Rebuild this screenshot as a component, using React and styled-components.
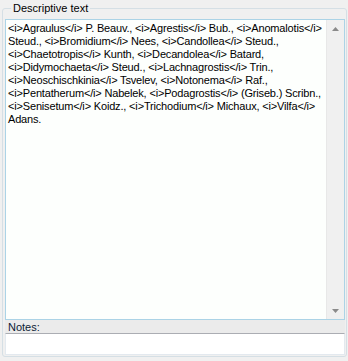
import React from "react";
import styled, { createGlobalStyle } from "styled-components";

const Global = createGlobalStyle`
  html, body { margin: 0; padding: 0; background: #f0f0f0; }
  body { width: 348px; height: 361px; overflow: hidden; }
`;

const Page = styled.div`
  width: 348px;
  height: 361px;
  box-sizing: border-box;
  padding: 2px 1px 4px 2px;
  font-family: "Liberation Sans", Arial, sans-serif;
  font-size: 11px;
  color: #000;
`;

const Group = styled.fieldset`
  margin: 0;
  height: 100%;
  box-sizing: border-box;
  border: 1px solid #d5dfe5;
  border-radius: 3px;
  padding: 4px 1px 1px 2px;
  display: flex;
  flex-direction: column;
  min-width: 0;
`;

const Legend = styled.legend`
  padding: 0 2px;
  margin-left: 6px;
  font-size: 11px;
  line-height: 13px;
  color: #000;
`;

const TextArea = styled.div`
  flex: 1;
  display: flex;
  border: 1px solid #abd3e6;
  background: #fdfffd;
  min-height: 0;
`;

const Content = styled.div`
  flex: 1;
  padding: 2px 2px 0 2px;
  line-height: 13px;
  letter-spacing: -0.17px;
  white-space: nowrap;
  overflow: hidden;
`;

const Scrollbar = styled.div`
  width: 17px;
  display: flex;
  flex-direction: column;
  justify-content: space-between;
  background: #f0f0f0;
  border-left: 1px solid #e8e8e8;
`;

const Arrow = styled.div`
  height: 17px;
  display: flex;
  align-items: center;
  justify-content: center;
`;

const NotesLabel = styled.div`
  padding: 1px 0 0 3px;
  height: 12px;
  line-height: 12px;
  color: #0c1b35;
  background: #ebebeb;
`;

const NotesInput = styled.div`
  height: 20px;
  border: 1px solid #e3e9ef;
  border-top-color: #abadb3;
  background: #fff;
`;

const lines = [
  "<i>Agraulus</i> P. Beauv., <i>Agrestis</i> Bub., <i>Anomalotis</i>",
  "Steud., <i>Bromidium</i> Nees, <i>Candollea</i> Steud.,",
  "<i>Chaetotropis</i> Kunth, <i>Decandolea</i> Batard,",
  "<i>Didymochaeta</i> Steud., <i>Lachnagrostis</i> Trin.,",
  "<i>Neoschischkinia</i> Tsvelev, <i>Notonema</i> Raf.,",
  "<i>Pentatherum</i> Nabelek, <i>Podagrostis</i> (Griseb.) Scribn.,",
  "<i>Senisetum</i> Koidz., <i>Trichodium</i> Michaux, <i>Vilfa</i>",
  "Adans.",
];

export default function App() {
  return (
    <Page>
      <Global />
      <Group>
        <Legend>Descriptive text</Legend>
        <TextArea>
          <Content>
            {lines.map((l, i) => (
              <div key={i}>{l}</div>
            ))}
          </Content>
          <Scrollbar>
            <Arrow>
              <svg width="7" height="4" viewBox="0 0 7 4">
                <path d="M3.5 0 L7 4 L0 4 Z" fill="#8a8a8a" />
              </svg>
            </Arrow>
            <Arrow>
              <svg width="7" height="4" viewBox="0 0 7 4">
                <path d="M0 0 L7 0 L3.5 4 Z" fill="#8a8a8a" />
              </svg>
            </Arrow>
          </Scrollbar>
        </TextArea>
        <NotesLabel>Notes:</NotesLabel>
        <NotesInput />
      </Group>
    </Page>
  );
}
